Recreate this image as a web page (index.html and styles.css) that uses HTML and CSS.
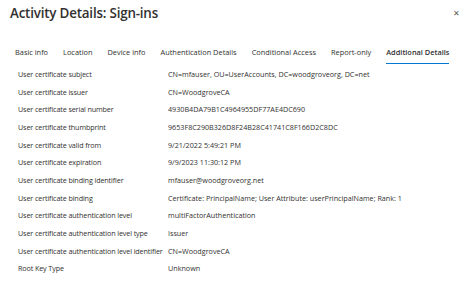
FILE: index.html
```html
<!DOCTYPE html>
<html lang="en">
<head>
  <meta charset="UTF-8">
  <title>Activity Details: Sign-ins</title>
  <link rel="stylesheet" href="styles.css">
</head>
<body>
  <div class="panel">
    <div class="header">
      <h1>Activity Details: Sign-ins</h1>
      <span class="close">&#x2715;</span>
    </div>

    <div class="tabs">
      <span class="tab">Basic info</span>
      <span class="tab">Location</span>
      <span class="tab">Device info</span>
      <span class="tab">Authentication Details</span>
      <span class="tab">Conditional Access</span>
      <span class="tab">Report-only</span>
      <span class="tab active">Additional Details</span>
    </div>

    <div class="details">
      <div class="row"><span class="label">User certificate subject</span><span class="value">CN=mfauser, OU=UserAccounts, DC=woodgroveorg, DC=net</span></div>
      <div class="row"><span class="label">User certificate issuer</span><span class="value">CN=WoodgroveCA</span></div>
      <div class="row"><span class="label">User certificate serial number</span><span class="value">4930B4DA79B1C4964955DF77AE4DC690</span></div>
      <div class="row"><span class="label">User certificate thumbprint</span><span class="value">9653F8C290B326D8F24B28C41741C8F166D2C8DC</span></div>
      <div class="row"><span class="label">User certificate valid from</span><span class="value">9/21/2022 5:49:21 PM</span></div>
      <div class="row"><span class="label">User certificate expiration</span><span class="value">9/9/2023 11:30:12 PM</span></div>
      <div class="row"><span class="label">User certificate binding identifier</span><span class="value">mfauser@woodgroveorg.net</span></div>
      <div class="row"><span class="label">User certificate binding</span><span class="value">Certificate: PrincipalName; User Attribute: userPrincipalName; Rank: 1</span></div>
      <div class="row"><span class="label">User certificate authentication level</span><span class="value">multiFactorAuthentication</span></div>
      <div class="row"><span class="label">User certificate authentication level type</span><span class="value">Issuer</span></div>
      <div class="row"><span class="label">User certificate authentication level identifier</span><span class="value">CN=WoodgroveCA</span></div>
      <div class="row"><span class="label">Root Key Type</span><span class="value">Unknown</span></div>
    </div>
  </div>
</body>
</html>
```

FILE: styles.css
```css
body {
  margin: 0;
  background-color: #fff;
  color: #323130;
  font-family: 'Open Sans', 'Noto Sans', sans-serif;
}
.panel {
  padding: 0 10px;
}
.header {
  display: flex;
  justify-content: space-between;
  align-items: center;
  height: 25px;
}
h1 {
  margin: 0;
  font-size: 13.4px;
  font-weight: 600;
  letter-spacing: -0.2px;
  color: #323130;
}
.close {
  font-size: 8px;
  color: #605e5c;
  margin-right: 4px;
}
.tabs {
  display: flex;
  gap: 15px;
  margin-top: 18px;
  padding-left: 5px;
  font-size: 7.4px;
}
.tab {
  padding: 4px 0 6px;
  color: #323130;
}
.tab.active {
  font-weight: 600;
  border-bottom: 1.5px solid #0078d4;
}
.details {
  padding: 1px 0 0 8px;
  font-size: 7.2px;
}
.row {
  display: flex;
  height: 17.7px;
  align-items: center;
  white-space: nowrap;
}
.label {
  width: 150px;
  flex-shrink: 0;
  letter-spacing: -0.12px;
  color: #323130;
}
.value {
  color: #323130;
}
```
